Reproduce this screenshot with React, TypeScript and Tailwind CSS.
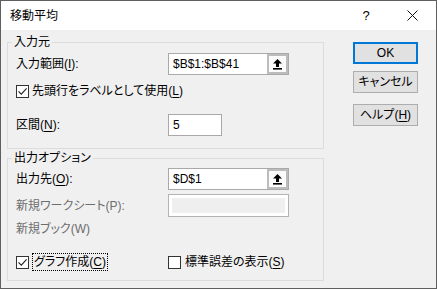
import React from 'react';

function CheckBox({ checked }: { checked?: boolean }) {
  return (
    <span className="w-[13px] h-[13px] border border-[#333333] bg-white flex items-center justify-center shrink-0">
      {checked && (
        <svg width="11" height="11" viewBox="0 0 11 11">
          <path d="M1.5 5.3 L4.3 8.2 L9.6 2.4" fill="none" stroke="#222" strokeWidth="1.1" />
        </svg>
      )}
    </span>
  );
}

function CollapseArrow() {
  return (
    <svg width="11" height="12" viewBox="0 0 11 12">
      <path d="M5.5 1 L10 5.6 H7 V9 H4 V5.6 H1 Z" fill="#000" />
      <rect x="1" y="10" width="9" height="1.6" fill="#000" />
    </svg>
  );
}

// 参照入力欄（右端に折りたたみボタン）
function RefEdit({ value }: { value: string }) {
  return (
    <div className="w-[121px] h-[22px] border border-[#a9a9a9] bg-white flex">
      <div className="flex-1 pl-[4px] flex items-center text-[12px] leading-[14px]">{value}</div>
      <div className="w-[21px] border-2 border-[#bcbcbc] bg-[#fbfbfb] flex items-center justify-center">
        <CollapseArrow />
      </div>
    </div>
  );
}

function Key({ k }: { k: string }) {
  return (
    <>
      (<span className="underline underline-offset-2">{k}</span>)
    </>
  );
}

function Button({ children, focused }: { children: React.ReactNode; focused?: boolean }) {
  return (
    <div
      className={
        focused
          ? 'h-[22px] bg-[#e1e1e1] border-2 border-[#0078d7] flex items-center justify-center text-[12px]'
          : 'h-[22px] bg-[#e1e1e1] border border-[#adadad] flex items-center justify-center text-[12px]'
      }
    >
      {children}
    </div>
  );
}

export default function App() {
  return (
    <div className="w-[437px] h-[289px] border border-[#5f5f5f] bg-[#f0f0f0] flex flex-col text-black font-['Liberation_Sans','Noto_Sans_CJK_JP',sans-serif] [font-feature-settings:'palt'] leading-[14px] text-[12px] overflow-hidden">
      {/* タイトルバー */}
      <div className="h-[29px] bg-white flex items-center shrink-0">
        <div className="pl-[9px] text-[12px]">移動平均</div>
        <div className="ml-auto w-[46px] flex justify-center text-[13px]">?</div>
        <div className="w-[46px] mr-[1px] flex justify-center">
          <svg width="11" height="11" viewBox="0 0 11 11">
            <path d="M0.5 0.5 L10.5 10.5 M10.5 0.5 L0.5 10.5" stroke="#111" strokeWidth="1" />
          </svg>
        </div>
      </div>

      {/* 本体 */}
      <div className="flex flex-1">
        <div className="ml-[6px] w-[317px] pt-[5px] flex flex-col">
          {/* 入力元 */}
          <fieldset className="border border-[#dcdcdc] pl-[4px] pr-[4px] pb-[12px] m-0">
            <legend className="px-[2px] leading-[14px]">入力元</legend>
            <div className="pl-[4px] flex flex-col">
              <div className="mt-[4px] h-[22px] flex items-center">
                <div className="w-[152px]">
                  入力範囲<Key k="I" />:
                </div>
                <RefEdit value="$B$1:$B$41" />
              </div>
              <div className="mt-[7px] h-[18px] flex items-center">
                <CheckBox checked />
                <span className="ml-[3px]">
                  先頭行をラベルとして使用<Key k="L" />
                </span>
              </div>
              <div className="mt-[14px] h-[22px] flex items-center">
                <div className="w-[152px]">
                  区間<Key k="N" />:
                </div>
                <div className="w-[54px] h-[22px] border border-[#a9a9a9] bg-white pl-[4px] flex items-center">5</div>
              </div>
            </div>
          </fieldset>

          {/* 出力オプション */}
          <fieldset className="mt-[2px] border border-[#dcdcdc] pl-[4px] pr-[4px] pb-[9px] m-0">
            <legend className="px-[2px] leading-[14px]">出力オプション</legend>
            <div className="pl-[4px] flex flex-col">
              <div className="mt-[3px] h-[22px] flex items-center">
                <div className="w-[152px]">
                  出力先<Key k="O" />:
                </div>
                <RefEdit value="$D$1" />
              </div>
              <div className="mt-[4px] h-[23px] flex items-center">
                <div className="w-[152px] text-[#6d6d6d]">新規ワークシート(P):</div>
                <div className="w-[121px] h-[23px] border border-[#b4b4b4] bg-white p-[3px]">
                  <div className="w-full h-full bg-[#efefef]" />
                </div>
              </div>
              <div className="mt-[4px] h-[16px] flex items-center text-[#6d6d6d]">新規ブック(W)</div>
              <div className="mt-[16px] h-[18px] flex items-center">
                <div className="w-[152px] flex items-center">
                  <CheckBox checked />
                  <span className="ml-[3px] h-[18px] border border-dotted border-black px-[1px] flex items-center">
                    グラフ作成<Key k="C" />
                  </span>
                </div>
                <div className="flex items-center">
                  <CheckBox />
                  <span className="ml-[4px]">
                    標準誤差の表示<Key k="S" />
                  </span>
                </div>
              </div>
            </div>
          </fieldset>
        </div>

        {/* ボタン */}
        <div className="ml-[29px] w-[65px] pt-[12px] flex flex-col">
          <Button focused>OK</Button>
          <div className="mt-[7px]">
            <Button>キャンセル</Button>
          </div>
          <div className="mt-[11px]">
            <Button>
              ヘルプ<Key k="H" />
            </Button>
          </div>
        </div>
      </div>
    </div>
  );
}
